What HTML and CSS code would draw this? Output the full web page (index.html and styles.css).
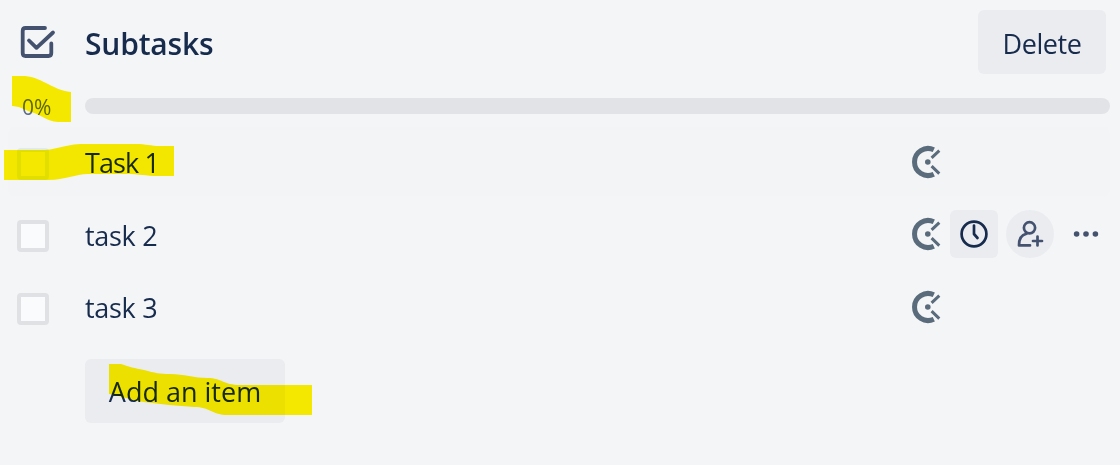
FILE: index.html
```html
<!DOCTYPE html>
<html lang="en">
<head>
    <meta charset="UTF-8">
    <meta name="viewport" content="width=device-width, initial-scale=1.0">
    <title>Subtasks</title>
    <link rel="stylesheet" href="styles.css">
</head>
<body>
    <svg class="symbols" width="0" height="0">
        <symbol id="clockify" viewBox="0 0 30 34">
            <path d="M22.8 4.8A13.5 13.5 0 1 0 22.8 29.2" fill="none" stroke="#5a6b7b" stroke-width="5"/>
            <circle cx="16.8" cy="17" r="2.8" fill="#5a6b7b"/>
            <path d="M20.6 12.8L28.3 5.6M20.6 21.2L28.3 28.6" fill="none" stroke="#5a6b7b" stroke-width="3"/>
        </symbol>
    </svg>
    <div class="checklist">
        <div class="header">
            <svg class="title-icon" width="38" height="36" viewBox="0 0 38 36">
                <path d="M27 4H7.5Q4.7 4 4.7 7V29Q4.7 32 7.5 32H30.5Q33.3 32 33.3 29V19.5M11 16.5L18.5 23.8L35 8.5" fill="none" stroke="#44526f" stroke-width="3.8" stroke-linecap="round" stroke-linejoin="round"/>
            </svg>
            <h3 class="title">Subtasks</h3>
            <button class="btn delete">Delete</button>
        </div>
        <div class="progress">
            <span class="percent">0%</span>
            <div class="bar"></div>
        </div>
        <div class="items">
            <div class="item active">
                <span class="checkbox"></span>
                <span class="name">Task 1</span>
                <svg class="timer" width="30" height="34"><use href="#clockify"/></svg>
            </div>
            <div class="item">
                <span class="checkbox"></span>
                <span class="name">task 2</span>
                <svg class="timer" width="30" height="34"><use href="#clockify"/></svg>
                <div class="actions">
                    <span class="action due">
                        <svg width="30" height="30" viewBox="0 0 30 30" fill="none" stroke="#172b4d" stroke-width="2.7" stroke-linecap="round">
                            <circle cx="15" cy="15" r="12.4"/>
                            <path d="M15 6.5V15L18.5 19" stroke-linejoin="round"/>
                        </svg>
                    </span>
                    <span class="action member">
                        <svg width="30" height="30" viewBox="0 0 30 30" fill="none" stroke="#44526f" stroke-width="2.7" stroke-linecap="round" stroke-linejoin="round">
                            <circle cx="14.5" cy="8.8" r="5.6"/>
                            <path d="M15 26.4H4Q3.8 16.5 11.5 14.8M22.5 17.5V26.5M18 22H27"/>
                        </svg>
                    </span>
                    <span class="action more">
                        <svg width="26" height="8" viewBox="0 0 26 8" fill="#44526f">
                            <circle cx="3.6" cy="4" r="2.8"/>
                            <circle cx="13" cy="4" r="2.8"/>
                            <circle cx="22.4" cy="4" r="2.8"/>
                        </svg>
                    </span>
                </div>
            </div>
            <div class="item">
                <span class="checkbox"></span>
                <span class="name">task 3</span>
                <svg class="timer" width="30" height="34"><use href="#clockify"/></svg>
            </div>
        </div>
        <button class="btn add">Add an item</button>
    </div>

    <!-- marker strokes over the checklist -->
    <svg class="marker" width="1120" height="465" viewBox="0 0 1120 465">
        <path d="M12 76H25C34 77 40 80 46 83C54 87 61 91 71 92V122H58C46 121 42 115 31 112C25 110 19 106 12 106Z"/>
        <path d="M4 150H42C58 150 64 144 84 144H136C146 144 151 146 160 146H174V176H158C145 176 140 174 126 174H88C75 174 66 180 48 180H4Z"/>
        <path d="M109 364H121C130 367 134 368 144 370C155 373 160 374 170 374C184 374 194 378 208 378C221 378 224 385 240 385H312V415H228C212 415 210 407 194 407C178 406 160 404 144 402C130 400 122 396 109 394Z"/>
    </svg>
</body>
</html>
```
FILE: styles.css
```css
*{
    padding: 0;
    margin: 0;
    box-sizing: border-box;
}
body{
    font-family: "Open Sans", "Noto Sans", sans-serif;
    font-size: 27px;
    color: #172b4d;
    background-color: #f4f5f7;
    overflow: hidden;
}
.symbols{
    display: block;
}
.checklist{
    height: 465px;
}
.header{
    display: flex;
    align-items: center;
    height: 84px;
    padding: 0 14px 0 18px;
}
.title-icon{
    margin-right: 29px;
}
.title{
    flex: 1;
    font-size: 30px;
    font-weight: 600;
    line-height: 40px;
    letter-spacing: -0.2px;
    padding-top: 3px;
}
.btn{
    height: 64px;
    border: none;
    border-radius: 6px;
    background-color: #ebecf0;
    color: #172b4d;
    font-family: inherit;
    font-size: 27px;
}
.delete{
    width: 128px;
    padding-top: 2px;
    letter-spacing: -0.4px;
}
.progress{
    display: flex;
    align-items: center;
    height: 43px;
    padding: 1px 10px 0 22px;
}
.percent{
    width: 63px;
    padding-top: 2px;
    font-size: 21px;
    line-height: 30px;
    color: #5e6c84;
}
.bar{
    flex: 1;
    height: 16px;
    border-radius: 8px;
    background-color: #e2e3e6;
}
.items{
    display: flex;
    flex-direction: column;
    gap: 3.5px;
    margin: 0 10px 0 8px;
}
.item{
    display: flex;
    align-items: center;
    height: 69px;
    padding-left: 9px;
    border-radius: 6px;
}
.active{
    background-color: #f3f4f6;
}
.checkbox{
    width: 32px;
    height: 32px;
    margin: 4px 36px 0 0;
    border: 4px solid #dfe1e5;
    border-radius: 4px;
    background-color: #fafbfc;
}
.name{
    width: 826px;
    line-height: 38px;
    padding-top: 3px;
    letter-spacing: -0.3px;
}
.active .name{
    letter-spacing: -0.9px;
}
.timer{
    margin-right: 9px;
}
.checkbox, .name, .timer{
    flex-shrink: 0;
}
.active .checkbox{
    border-color: #e2eae4;
    background-color: #f4f5f7;
}
.actions{
    display: flex;
    gap: 8px;
}
.action{
    display: flex;
    align-items: center;
    justify-content: center;
    width: 48px;
    height: 48px;
}
.due{
    border-radius: 6px;
    background-color: #ebecf0;
}
.member{
    border-radius: 50%;
    background-color: #ebecf0;
}
.add{
    width: 200px;
    margin: 18px 0 0 85px;
}
.marker{
    position: absolute;
    top: 0;
    left: 0;
    fill: #fff200;
    mix-blend-mode: multiply;
    pointer-events: none;
}
```
